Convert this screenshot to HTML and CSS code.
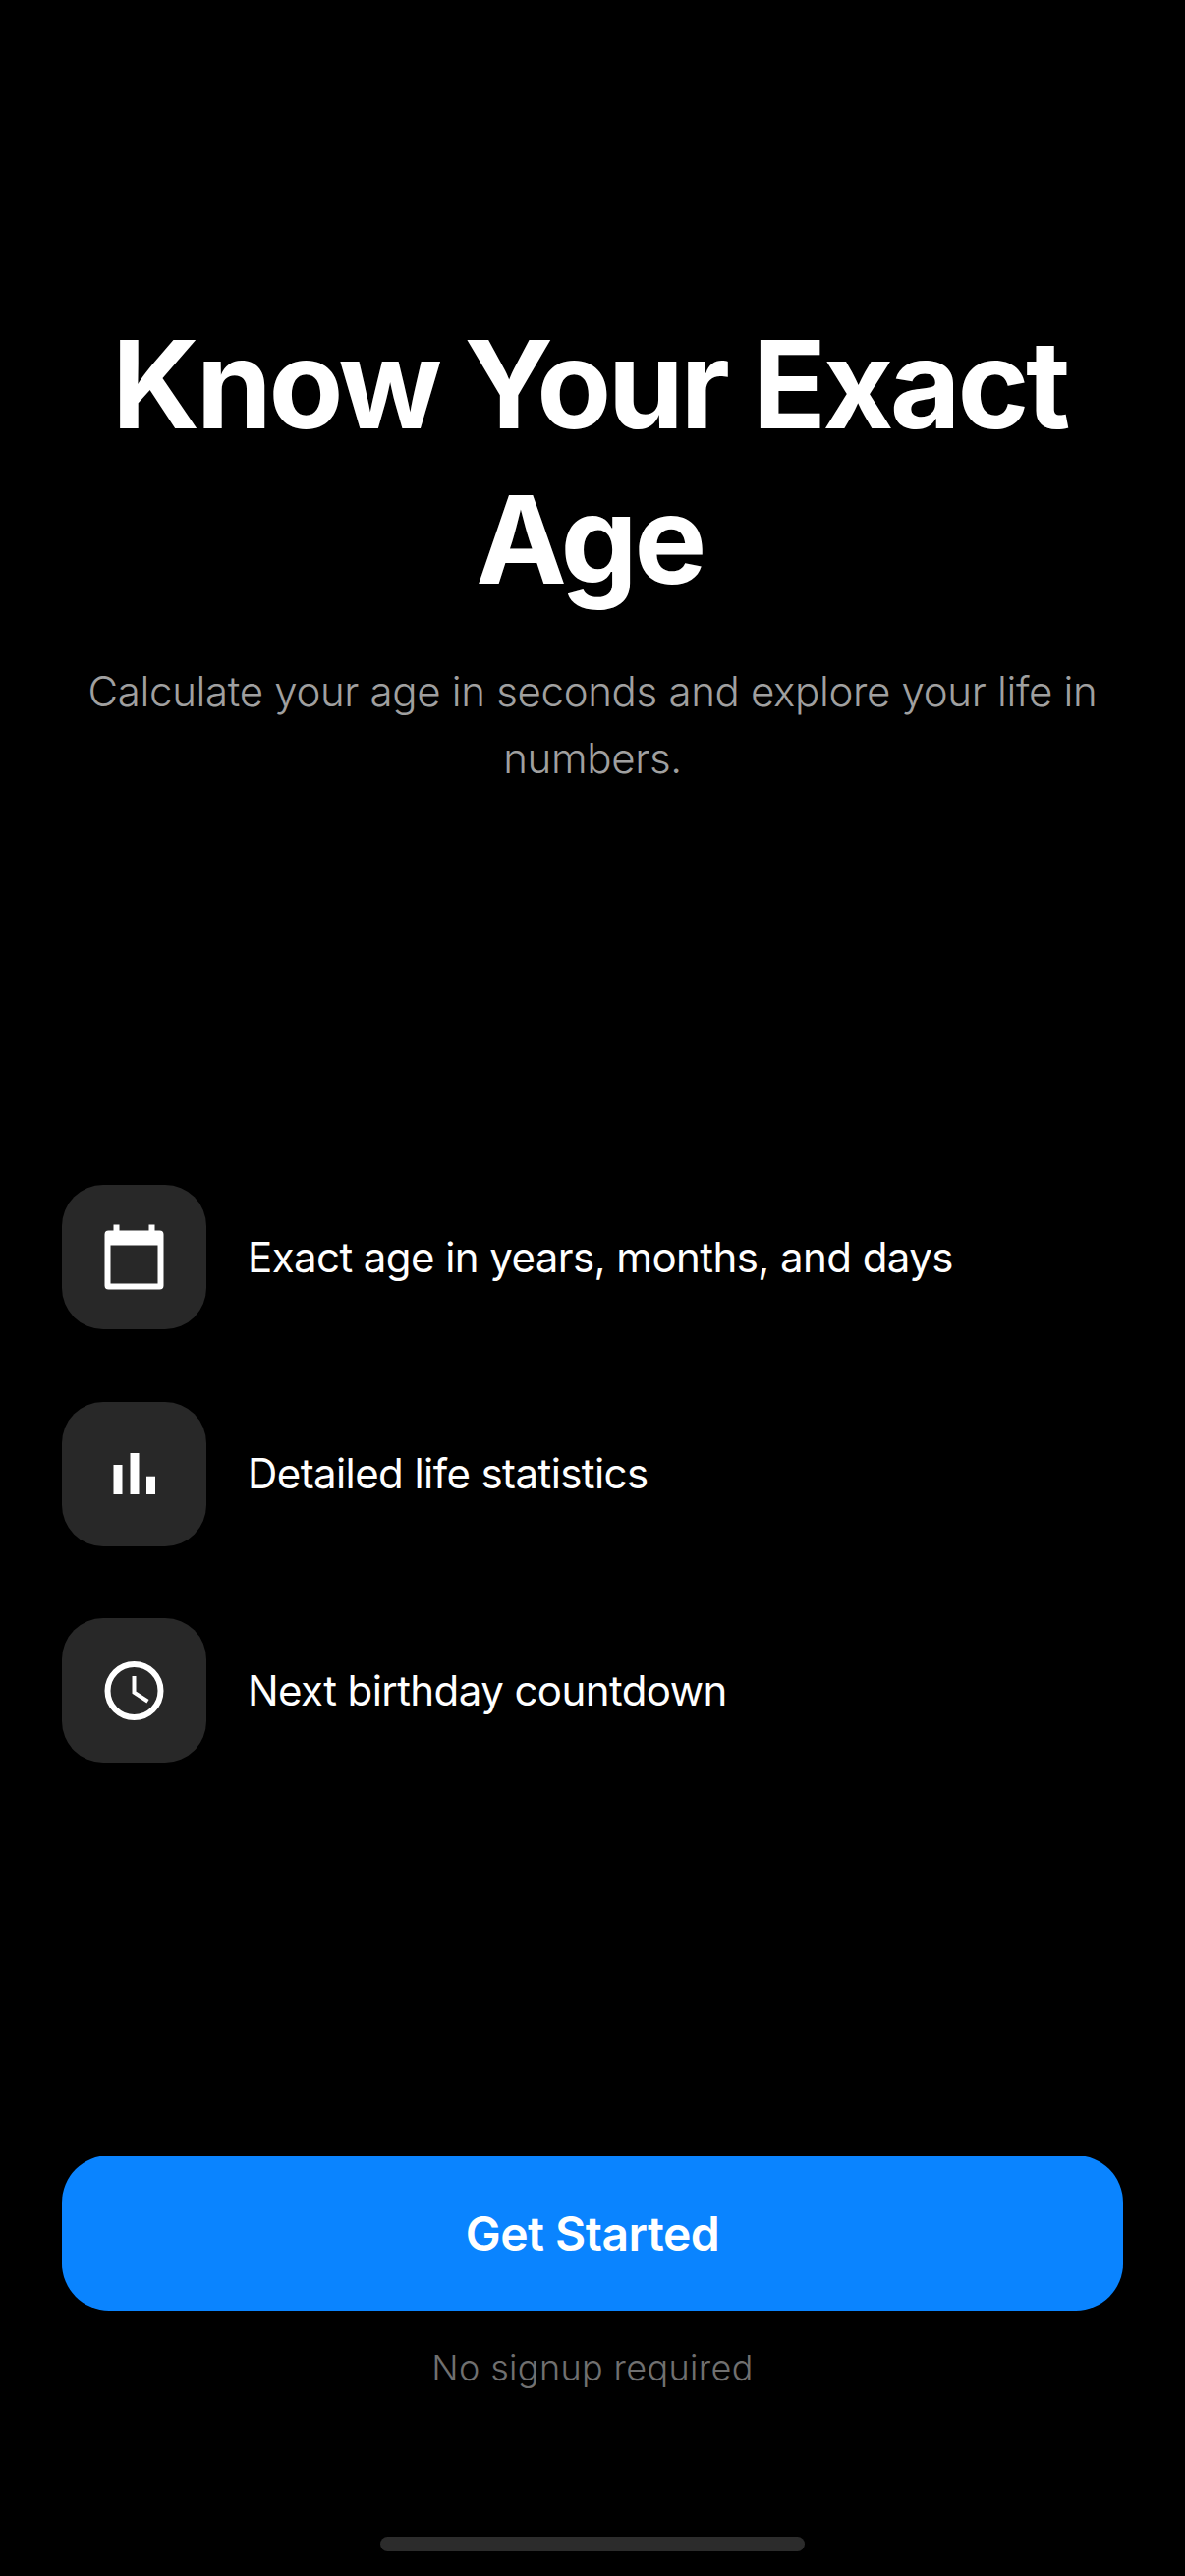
FILE: index.html
```html
<!DOCTYPE html>
<html lang="en">
<head>
  <meta charset="UTF-8">
  <title>Know Your Exact Age</title>
  <meta name="viewport" content="width=device-width, initial-scale=1.0">
  <link rel="stylesheet" href="styles.css">
</head>
<body>
  <main class="screen">
    <header class="intro">
      <h1 class="title">Know Your Exact Age</h1>
      <p class="subtitle">Calculate your age in seconds and explore your life in numbers.</p>
    </header>

    <ul class="features">
      <li class="feature">
        <span class="feature-icon">
          <svg viewBox="0 0 72 72" width="72" height="72">
            <path fill="#fff" fill-rule="evenodd" d="M14.5 2.5h6v6h30v-6h6v6h5a4 4 0 0 1 4 4v52a4 4 0 0 1-4 4h-52a4 4 0 0 1-4-4v-52a4 4 0 0 1 4-4h5zM11.5 23.5v39h48v-39z"/>
          </svg>
        </span>
        <span class="feature-text">Exact age in years, months, and days</span>
      </li>
      <li class="feature">
        <span class="feature-icon">
          <svg viewBox="0 0 72 72" width="72" height="72">
            <rect fill="#fff" x="14.5" y="27" width="9" height="30"/>
            <rect fill="#fff" x="31.5" y="15" width="9" height="42"/>
            <rect fill="#fff" x="48" y="38.7" width="9" height="18.3"/>
          </svg>
        </span>
        <span class="feature-text">Detailed life statistics</span>
      </li>
      <li class="feature">
        <span class="feature-icon">
          <svg viewBox="0 0 72 72" width="72" height="72">
            <circle cx="35.5" cy="36" r="27" fill="none" stroke="#fff" stroke-width="6"/>
            <path d="M35.5 21V37.7L49.5 46.7" fill="none" stroke="#fff" stroke-width="4"/>
          </svg>
        </span>
        <span class="feature-text">Next birthday countdown</span>
      </li>
    </ul>

    <footer class="actions">
      <button class="start-btn" type="button">Get Started</button>
      <p class="note">No signup required</p>
    </footer>

    <div class="home-bar"></div>
  </main>
</body>
</html>
```

FILE: styles.css
```css
* {
  box-sizing: border-box;
}

html,
body {
  margin: 0;
  padding: 0;
  background: #000;
}

body {
  font-family: Inter, 'Noto Sans', sans-serif;
  color: #fff;
}

.screen {
  display: flex;
  flex-direction: column;
  height: 2622px;
  padding: 0 63px;
  overflow: hidden;
}

.intro {
  padding-top: 312px;
  text-align: center;
}

.title {
  margin: 0 auto;
  padding-right: 6px;
  font-size: 124px;
  font-weight: 700;
  line-height: 158px;
  letter-spacing: -3.4px;
}

.subtitle {
  margin: 42px 0 0;
  font-size: 42px;
  font-weight: 300;
  line-height: 68px;
  letter-spacing: -0.33px;
  color: #a0a0a0;
}

.features {
  display: flex;
  flex-direction: column;
  gap: 73.5px;
  margin: 400px 0 0;
  padding: 0;
  list-style: none;
}

.feature {
  display: flex;
  align-items: center;
  gap: 42px;
}

.feature-icon {
  display: flex;
  align-items: center;
  justify-content: center;
  flex: none;
  width: 147px;
  height: 147px;
  border-radius: 42px;
  background: #282828;
}

.feature-text {
  font-size: 42px;
  line-height: 56px;
  letter-spacing: -0.58px;
}

.actions {
  margin-top: 400px;
  text-align: center;
}

.start-btn {
  display: block;
  width: 100%;
  height: 158px;
  border: none;
  border-radius: 48px;
  background: #0a84ff;
  color: #fff;
  font-family: inherit;
  font-size: 48px;
  font-weight: 600;
  letter-spacing: -0.5px;
}

.note {
  margin: 34px 0 0;
  font-size: 36px;
  font-weight: 300;
  line-height: 48px;
  letter-spacing: 0.35px;
  color: #707070;
}

.home-bar {
  align-self: center;
  width: 432px;
  height: 15px;
  margin-top: 148px;
  border-radius: 8px;
  background: #2c2c2c;
}
```
